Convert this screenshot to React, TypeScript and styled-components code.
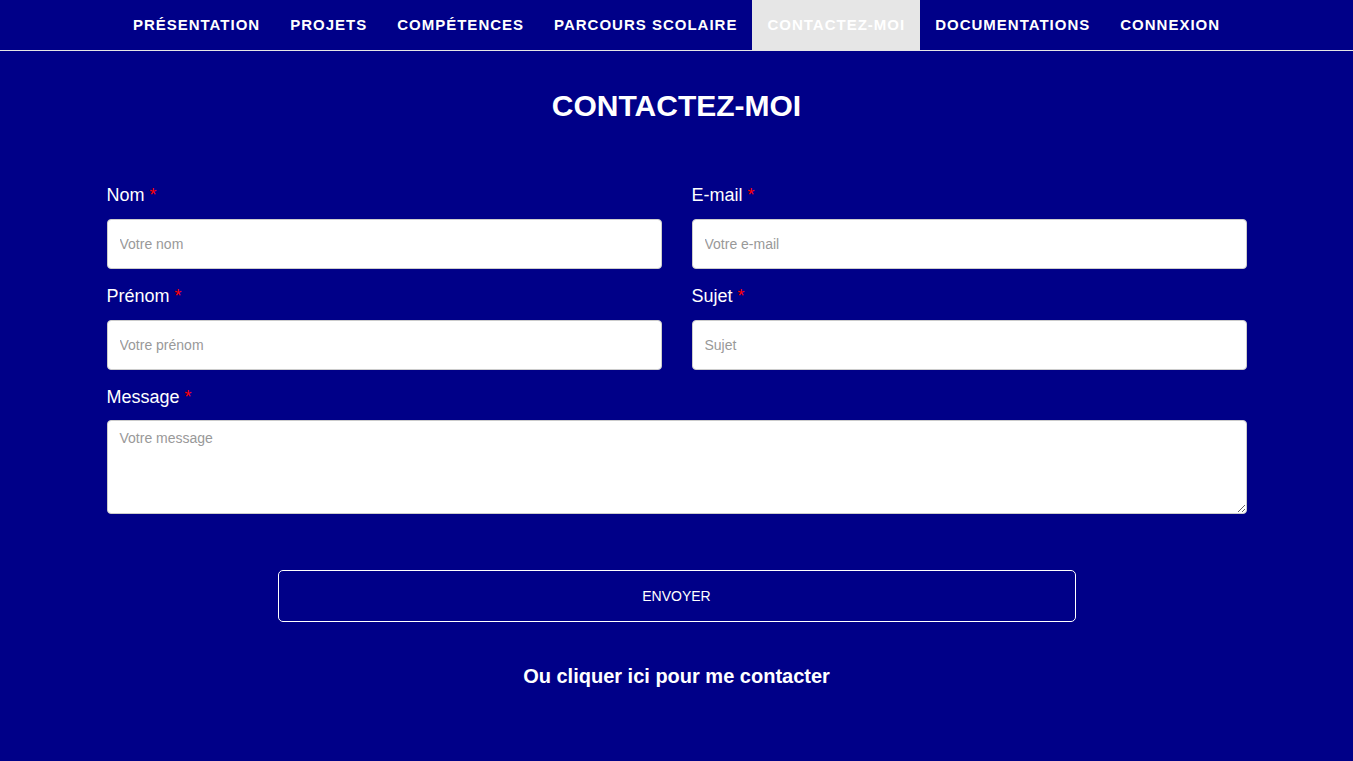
import * as React from "react";
import styled, {createGlobalStyle} from "styled-components";

const GlobalStyle = createGlobalStyle`
  html, body {
    margin: 0;
    padding: 0;
    background: #000088;
    font-family: "Liberation Sans", Arial, sans-serif;
  }
  * { box-sizing: border-box; }
`

const NavBar = styled.nav`
  display: flex;
  justify-content: center;
  height: 51px;
  border-bottom: 1px solid #e6e6e6;
`

const NavItem = styled.a<{active?: boolean}>`
  display: flex;
  align-items: center;
  height: 50px;
  padding: 0 15px 2px;
  font-size: 15px;
  font-weight: bold;
  letter-spacing: 1px;
  color: #fff;
  text-decoration: none;
  background: ${(props) => (props.active ? "#e6e6e6" : "transparent")};
`

const Title = styled.h1`
  margin: 37px 0 0;
  text-align: center;
  color: #fff;
  font-size: 30px;
  line-height: 36px;
  font-weight: bold;
`

const Form = styled.form`
  width: 1140px;
  margin: 59px auto 0;
`

const Row = styled.div`
  display: grid;
  grid-template-columns: 1fr 1fr;
  column-gap: 30px;
`

const Field = styled.div`
  display: flex;
  flex-direction: column;
  margin-bottom: 15px;
`

const Label = styled.label<{gap?: number}>`
  color: #fff;
  font-size: 18px;
  line-height: 24px;
  margin-bottom: ${(props) => props.gap ?? 12}px;
`

const Star = styled.span`
  color: #ff0000;
`

const Input = styled.input`
  height: 50px;
  padding: 0 12px;
  border: 1px solid #ccc;
  border-radius: 4px;
  background: #fff;
  font-family: "Liberation Sans", Arial, sans-serif;
  font-size: 14px;
  &::placeholder { color: #999; }
`

const TextArea = styled.textarea`
  height: 94px;
  padding: 9px 12px;
  border: 1px solid #ccc;
  border-radius: 4px;
  background: #fff;
  font-family: "Liberation Sans", Arial, sans-serif;
  font-size: 14px;
  &::placeholder { color: #999; }
`

const SubmitButton = styled.button`
  display: block;
  width: 798px;
  height: 52px;
  margin: 56px auto 0;
  border: 1px solid #fff;
  border-radius: 5px;
  background: transparent;
  color: #fff;
  font-family: "Liberation Sans", Arial, sans-serif;
  font-size: 14px;
  cursor: pointer;
`

const ContactLink = styled.a`
  display: block;
  margin-top: 41px;
  text-align: center;
  color: #fff;
  font-size: 20px;
  line-height: 26px;
  font-weight: bold;
  text-decoration: none;
`

const links = ["PRÉSENTATION", "PROJETS", "COMPÉTENCES", "PARCOURS SCOLAIRE", "CONTACTEZ-MOI", "DOCUMENTATIONS", "CONNEXION"]

const TextField: React.FC<{label: string; placeholder: string}> = ({label, placeholder}) => (
    <Field>
        <Label>{label} <Star>*</Star></Label>
        <Input placeholder={placeholder}/>
    </Field>
)

const App: React.FC = () => {
    return (
        <>
            <GlobalStyle/>
            <NavBar>
                {links.map(link => <NavItem key={link} href="#" active={link === "CONTACTEZ-MOI"}>{link}</NavItem>)}
            </NavBar>
            <Title>CONTACTEZ-MOI</Title>
            <Form onSubmit={e => e.preventDefault()}>
                <Row>
                    <TextField label="Nom" placeholder="Votre nom"/>
                    <TextField label="E-mail" placeholder="Votre e-mail"/>
                </Row>
                <Row>
                    <TextField label="Prénom" placeholder="Votre prénom"/>
                    <TextField label="Sujet" placeholder="Sujet"/>
                </Row>
                <Field>
                    <Label gap={11}>Message <Star>*</Star></Label>
                    <TextArea placeholder="Votre message"/>
                </Field>
                <SubmitButton type="submit">ENVOYER</SubmitButton>
            </Form>
            <ContactLink href="#">Ou cliquer ici pour me contacter</ContactLink>
        </>
    )
}

export default App
